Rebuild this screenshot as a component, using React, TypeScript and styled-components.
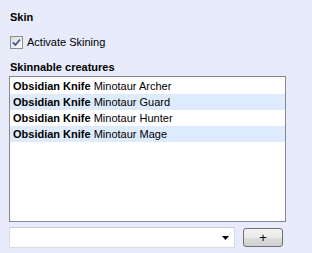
import React from "react";
import styled, { createGlobalStyle } from "styled-components";

const Global = createGlobalStyle`
  html, body { margin: 0; padding: 0; background: #e7ebfa; }
  body { font-family: "Liberation Sans", Arial, sans-serif; font-size: 11px; color: #000; }
`;

const Panel = styled.div`
  width: 312px;
  height: 253px;
  box-sizing: border-box;
  padding: 9px 26px 0 9px;
  display: flex;
  flex-direction: column;
  background: #e7ebfa;
`;

const Heading = styled.div`
  font-weight: bold;
  height: 16px;
  line-height: 16px;
  padding-left: 1px;
  margin-bottom: ${(p: { $gap: number }) => p.$gap}px;
`;

const CheckRow = styled.label`
  display: flex;
  align-items: center;
  gap: 4px;
  height: 16px;
  line-height: 16px;
  margin-bottom: 9px;
`;

const Box = styled.span`
  width: 11px;
  height: 11px;
  border: 1px solid #8f8f8f;
  background: linear-gradient(135deg, #dcdcdc, #fbfbfb);
  margin-left: 1px;
  display: flex;
  align-items: center;
  justify-content: center;
`;

const List = styled.div`
  height: 146px;
  box-sizing: border-box;
  border: 1px solid #828790;
  background: #fff;
  padding: 1px 0;
  margin-bottom: 5px;
`;

const Row = styled.div<{ $alt: boolean }>`
  height: 16px;
  line-height: 16px;
  padding-left: 3px;
  background: ${(p) => (p.$alt ? "#deebfc" : "#fff")};
  white-space: nowrap;
`;

const Bottom = styled.div`
  display: flex;
  align-items: center;
  gap: 8px;
`;

const Combo = styled.div`
  width: 226px;
  height: 21px;
  box-sizing: border-box;
  border: 1px solid #d8dbe4;
  border-top-color: #c9ccd6;
  background: #fff;
  display: flex;
  align-items: center;
  justify-content: flex-end;
  padding-right: 5px;
`;

const Button = styled.button`
  width: 40px;
  height: 19px;
  box-sizing: border-box;
  border: 1px solid #707070;
  border-radius: 3px;
  background: linear-gradient(#f2f2f2 0%, #ebebeb 50%, #dddddd 50%, #cfcfcf 100%);
  font-family: "Liberation Sans", Arial, sans-serif;
  font-size: 13px;
  line-height: 15px;
  padding: 0;
  color: #000;
`;

const rows = ["Archer", "Guard", "Hunter", "Mage"];

export default function App() {
  return (
    <>
      <Global />
      <Panel>
        <Heading $gap={9}>Skin</Heading>
        <CheckRow>
          <Box>
            <svg width="9" height="9" viewBox="0 0 9 9">
              <path d="M1 4.5 L3.5 7 L8 1.5" stroke="#3c5a98" strokeWidth="1.8" fill="none" />
            </svg>
          </Box>
          <span>Activate Skining</span>
        </CheckRow>
        <Heading $gap={1}>Skinnable creatures</Heading>
        <List>
          {rows.map((r, i) => (
            <Row key={r} $alt={i % 2 === 1}>
              <b>Obsidian Knife</b> Minotaur {r}
            </Row>
          ))}
        </List>
        <Bottom>
          <Combo>
            <svg width="7" height="4" viewBox="0 0 7 4">
              <path d="M0 0 H7 L3.5 4 Z" fill="#000" />
            </svg>
          </Combo>
          <Button>+</Button>
        </Bottom>
      </Panel>
    </>
  );
}
